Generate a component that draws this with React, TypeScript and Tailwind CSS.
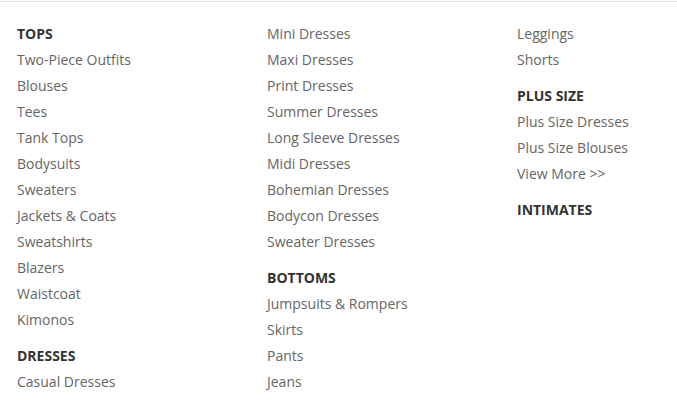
import React from "react";

type Group = { title?: string; items: string[] };

const columns: Group[][] = [
  [
    {
      title: "TOPS",
      items: [
        "Two-Piece Outfits",
        "Blouses",
        "Tees",
        "Tank Tops",
        "Bodysuits",
        "Sweaters",
        "Jackets & Coats",
        "Sweatshirts",
        "Blazers",
        "Waistcoat",
        "Kimonos",
      ],
    },
    { title: "DRESSES", items: ["Casual Dresses"] },
  ],
  [
    {
      items: [
        "Mini Dresses",
        "Maxi Dresses",
        "Print Dresses",
        "Summer Dresses",
        "Long Sleeve Dresses",
        "Midi Dresses",
        "Bohemian Dresses",
        "Bodycon Dresses",
        "Sweater Dresses",
      ],
    },
    { title: "BOTTOMS", items: ["Jumpsuits & Rompers", "Skirts", "Pants", "Jeans"] },
  ],
  [
    { items: ["Leggings", "Shorts"] },
    { title: "PLUS SIZE", items: ["Plus Size Dresses", "Plus Size Blouses", "View More >>"] },
    { title: "INTIMATES", items: [] },
  ],
];

export default function App() {
  return (
    <div
      className="h-[405px] w-[677px] overflow-hidden bg-white"
      style={{ fontFamily: '"Open Sans", sans-serif' }}
    >
      <div className="mt-px border-t border-[#e2e2e2] pl-[17px] pt-[19px]">
        <div className="flex">
          {columns.map((col, ci) => (
            <div key={ci} className="w-[250px] shrink-0">
              {col.map((g, gi) => (
                <div key={gi} className={g.title && !(ci === 0 && gi === 0) ? "mt-[10px]" : ""}>
                  {g.title && (
                    <div className="text-[14px] font-bold leading-[26px] text-[#333]">{g.title}</div>
                  )}
                  {g.items.map((it) => (
                    <a key={it} href="#" className="block text-[14px] leading-[26px] text-[#666]">
                      {it}
                    </a>
                  ))}
                </div>
              ))}
            </div>
          ))}
        </div>
      </div>
    </div>
  );
}
